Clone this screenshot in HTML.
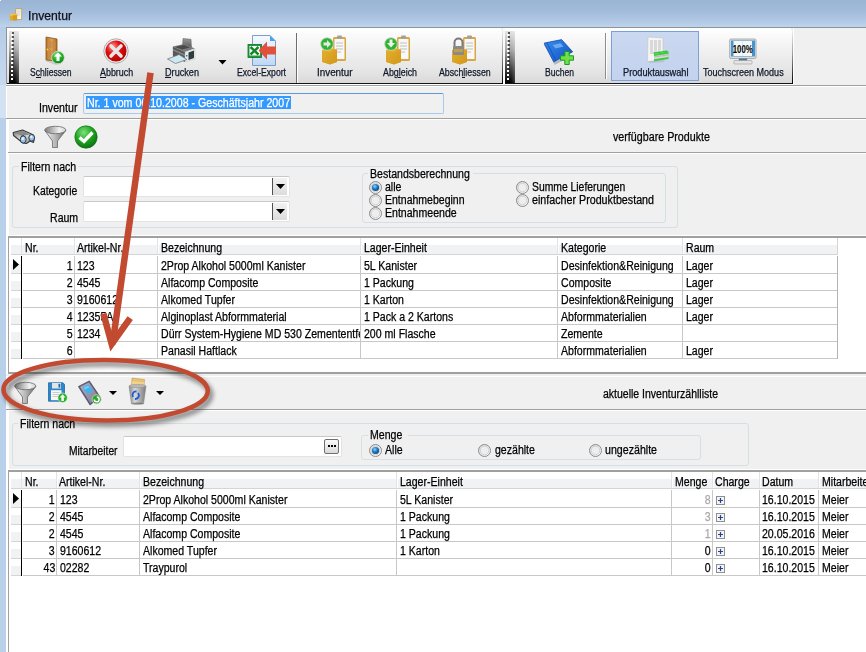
<!DOCTYPE html><html><head><meta charset="utf-8"><title>Inventur</title><style>
*{margin:0;padding:0;box-sizing:border-box}
html,body{width:866px;height:652px;overflow:hidden;background:#f0f0f0;position:relative;font-family:"Liberation Sans",sans-serif}
div,span,svg{position:absolute}
.t{white-space:nowrap;line-height:14px;-webkit-text-stroke:0.25px currentColor;font-family:"Liberation Sans",sans-serif}
</style></head><body><div style="left:0px;top:0px;width:866px;height:27px;background:linear-gradient(#9ab4d4,#a3bcdb 45%,#b2cae5 80%,#bdd4ec)"></div>
<div style="left:0px;top:27px;width:6px;height:58px;background:linear-gradient(#b6cde7,#c6d9ef)"></div>
<div style="left:0px;top:85px;width:6px;height:33px;background:#d2e2f3"></div>
<div style="left:0px;top:118px;width:6px;height:534px;background:#b9d0ea"></div>
<div style="left:0px;top:0px;width:1px;height:1px;background:#fff"></div>
<svg style="left:8px;top:7px" width="16" height="16" viewBox="0 0 16 16">
<rect x="7.3" y="1.2" width="6.8" height="11.6" rx="0.8" fill="#c9a050"/>
<rect x="8.2" y="2.2" width="5" height="9.8" fill="#f4f4f0"/>
<path d="M9 4 H12.5 M9 6 H12.5 M9 8 H12" stroke="#b8b8b8" stroke-width="0.6"/>
<rect x="1.8" y="6.8" width="7.4" height="6.8" rx="0.6" fill="#e2aa2a"/>
<rect x="1.8" y="6.8" width="7.4" height="2" fill="#f0c250"/>
<rect x="5" y="8" width="4" height="5.5" fill="#cf951c" opacity="0.7"/>
</svg>
<span class="t" style="left:27.5px;top:9px;font-size:12px;letter-spacing:0px;color:#10101a;transform:scaleX(1.015);transform-origin:0 0;">Inventur</span>
<div style="left:6px;top:27px;width:860px;height:1px;background:#8f9397"></div>
<div style="left:6px;top:28px;width:1px;height:624px;background:#ffffff"></div>
<div style="left:7px;top:119px;width:2px;height:533px;background:#ffffff"></div>
<div style="left:6px;top:27px;width:1px;height:57px;background:#8f9397"></div>
<div style="left:7px;top:28px;width:495px;height:55px;background:linear-gradient(#ffffff,#f6f6f6 25%,#e4e4e4 80%,#d9d9d9)"></div>
<div style="left:7px;top:83px;width:496px;height:1px;background:#141414"></div>
<div style="left:502px;top:30px;width:1px;height:54px;background:linear-gradient(#f0f0f0,#9a9a9a 45%,#000)"></div>
<div style="left:503px;top:29px;width:1px;height:56px;background:#ffffff"></div>
<div style="left:501px;top:28px;width:2px;height:2px;background:#f0f0f0"></div>
<div style="left:9px;top:31px;width:10px;height:52px;background:linear-gradient(#e4e4e4,#a8a8a8 35%,#3a3a3a 75%,#000)"></div>
<div style="left:15px;top:31px;width:4px;height:52px;background:linear-gradient(90deg,rgba(255,255,255,0),rgba(255,255,255,.2))"></div>
<div style="left:12px;top:32px;width:2px;height:2px;background:rgba(40,40,40,.75)"></div>
<div style="left:11px;top:34px;width:2px;height:2px;background:#fff"></div>
<div style="left:12px;top:36px;width:2px;height:2px;background:rgba(40,40,40,.75)"></div>
<div style="left:11px;top:38px;width:2px;height:2px;background:#fff"></div>
<div style="left:12px;top:40px;width:2px;height:2px;background:rgba(40,40,40,.75)"></div>
<div style="left:11px;top:42px;width:2px;height:2px;background:#fff"></div>
<div style="left:12px;top:44px;width:2px;height:2px;background:rgba(40,40,40,.75)"></div>
<div style="left:11px;top:46px;width:2px;height:2px;background:#fff"></div>
<div style="left:12px;top:48px;width:2px;height:2px;background:rgba(40,40,40,.75)"></div>
<div style="left:11px;top:50px;width:2px;height:2px;background:#fff"></div>
<div style="left:12px;top:52px;width:2px;height:2px;background:rgba(40,40,40,.75)"></div>
<div style="left:11px;top:54px;width:2px;height:2px;background:#fff"></div>
<div style="left:12px;top:56px;width:2px;height:2px;background:rgba(40,40,40,.75)"></div>
<div style="left:11px;top:58px;width:2px;height:2px;background:#fff"></div>
<div style="left:12px;top:60px;width:2px;height:2px;background:rgba(40,40,40,.75)"></div>
<div style="left:11px;top:62px;width:2px;height:2px;background:#fff"></div>
<div style="left:12px;top:64px;width:2px;height:2px;background:rgba(40,40,40,.75)"></div>
<div style="left:11px;top:66px;width:2px;height:2px;background:#fff"></div>
<div style="left:12px;top:68px;width:2px;height:2px;background:rgba(40,40,40,.75)"></div>
<div style="left:11px;top:70px;width:2px;height:2px;background:#fff"></div>
<div style="left:12px;top:72px;width:2px;height:2px;background:rgba(40,40,40,.75)"></div>
<div style="left:11px;top:74px;width:2px;height:2px;background:#fff"></div>
<div style="left:12px;top:76px;width:2px;height:2px;background:rgba(40,40,40,.75)"></div>
<div style="left:11px;top:78px;width:2px;height:2px;background:#fff"></div>
<div style="left:503px;top:28px;width:2px;height:56px;background:#fafafa"></div>
<div style="left:505px;top:28px;width:287px;height:55px;background:linear-gradient(#ffffff,#f6f6f6 25%,#e4e4e4 80%,#d9d9d9)"></div>
<div style="left:505px;top:83px;width:288px;height:1px;background:#141414"></div>
<div style="left:792px;top:30px;width:1px;height:54px;background:linear-gradient(#f0f0f0,#9a9a9a 45%,#000)"></div>
<div style="left:793px;top:29px;width:1px;height:56px;background:#ffffff"></div>
<div style="left:791px;top:28px;width:2px;height:2px;background:#f0f0f0"></div>
<div style="left:505px;top:31px;width:10px;height:52px;background:linear-gradient(#e4e4e4,#a8a8a8 35%,#3a3a3a 75%,#000)"></div>
<div style="left:511px;top:31px;width:4px;height:52px;background:linear-gradient(90deg,rgba(255,255,255,0),rgba(255,255,255,.2))"></div>
<div style="left:508px;top:32px;width:2px;height:2px;background:rgba(40,40,40,.75)"></div>
<div style="left:507px;top:34px;width:2px;height:2px;background:#fff"></div>
<div style="left:508px;top:36px;width:2px;height:2px;background:rgba(40,40,40,.75)"></div>
<div style="left:507px;top:38px;width:2px;height:2px;background:#fff"></div>
<div style="left:508px;top:40px;width:2px;height:2px;background:rgba(40,40,40,.75)"></div>
<div style="left:507px;top:42px;width:2px;height:2px;background:#fff"></div>
<div style="left:508px;top:44px;width:2px;height:2px;background:rgba(40,40,40,.75)"></div>
<div style="left:507px;top:46px;width:2px;height:2px;background:#fff"></div>
<div style="left:508px;top:48px;width:2px;height:2px;background:rgba(40,40,40,.75)"></div>
<div style="left:507px;top:50px;width:2px;height:2px;background:#fff"></div>
<div style="left:508px;top:52px;width:2px;height:2px;background:rgba(40,40,40,.75)"></div>
<div style="left:507px;top:54px;width:2px;height:2px;background:#fff"></div>
<div style="left:508px;top:56px;width:2px;height:2px;background:rgba(40,40,40,.75)"></div>
<div style="left:507px;top:58px;width:2px;height:2px;background:#fff"></div>
<div style="left:508px;top:60px;width:2px;height:2px;background:rgba(40,40,40,.75)"></div>
<div style="left:507px;top:62px;width:2px;height:2px;background:#fff"></div>
<div style="left:508px;top:64px;width:2px;height:2px;background:rgba(40,40,40,.75)"></div>
<div style="left:507px;top:66px;width:2px;height:2px;background:#fff"></div>
<div style="left:508px;top:68px;width:2px;height:2px;background:rgba(40,40,40,.75)"></div>
<div style="left:507px;top:70px;width:2px;height:2px;background:#fff"></div>
<div style="left:508px;top:72px;width:2px;height:2px;background:rgba(40,40,40,.75)"></div>
<div style="left:507px;top:74px;width:2px;height:2px;background:#fff"></div>
<div style="left:508px;top:76px;width:2px;height:2px;background:rgba(40,40,40,.75)"></div>
<div style="left:507px;top:78px;width:2px;height:2px;background:#fff"></div>
<div style="left:7px;top:84px;width:496px;height:1px;background:#ffffff"></div>
<div style="left:505px;top:84px;width:288px;height:1px;background:#ffffff"></div>
<div style="left:296px;top:33px;width:1px;height:50px;background:#6d6d6d"></div>
<div style="left:297px;top:33px;width:1px;height:50px;background:#ffffff"></div>
<div style="left:605px;top:33px;width:1px;height:46px;background:#8d8d8d"></div>
<div style="left:606px;top:33px;width:1px;height:46px;background:#ffffff"></div>
<div style="left:611px;top:31px;width:88px;height:50px;background:linear-gradient(#cad8f0,#c3d2ee);border:1px solid #7d9fdb"></div>
<span class="t" style="left:30px;top:67px;font-size:10px;line-height:12px;color:#101828;transform:scaleX(0.860);transform-origin:0 0;">Schliessen</span>
<span class="t" style="left:99.5px;top:67px;font-size:10px;line-height:12px;color:#101828;transform:scaleX(0.891);transform-origin:0 0;">Abbruch</span>
<span class="t" style="left:165px;top:67px;font-size:10px;line-height:12px;color:#101828;transform:scaleX(0.913);transform-origin:0 0;">Drucken</span>
<span class="t" style="left:237px;top:67px;font-size:10px;line-height:12px;color:#101828;transform:scaleX(0.864);transform-origin:0 0;">Excel-Export</span>
<span class="t" style="left:316.5px;top:67px;font-size:10px;line-height:12px;color:#101828;transform:scaleX(0.985);transform-origin:0 0;">Inventur</span>
<span class="t" style="left:383px;top:67px;font-size:10px;line-height:12px;color:#101828;transform:scaleX(0.886);transform-origin:0 0;">Abgleich</span>
<span class="t" style="left:438.5px;top:67px;font-size:10px;line-height:12px;color:#101828;transform:scaleX(0.877);transform-origin:0 0;">Abschliessen</span>
<span class="t" style="left:544.5px;top:67px;font-size:10px;line-height:12px;color:#101828;transform:scaleX(0.855);transform-origin:0 0;">Buchen</span>
<span class="t" style="left:622.5px;top:67px;font-size:10px;line-height:12px;color:#101828;transform:scaleX(0.921);transform-origin:0 0;">Produktauswahl</span>
<span class="t" style="left:702.5px;top:67px;font-size:10px;line-height:12px;color:#101828;transform:scaleX(0.901);transform-origin:0 0;">Touchscreen Modus</span>
<div style="left:36px;top:77px;width:5px;height:1px;background:#101828"></div>
<div style="left:100px;top:77px;width:6px;height:1px;background:#101828"></div>
<div style="left:165px;top:77px;width:6px;height:1px;background:#101828"></div>
<div style="left:398px;top:77px;width:3px;height:1px;background:#101828"></div>
<div style="left:462px;top:77px;width:3px;height:1px;background:#101828"></div>
<svg style="left:218px;top:60px" width="9" height="5" viewBox="0 0 9 5"><path d="M0.5 0 L8.5 0 L4.5 4.5Z" fill="#000"/></svg>
<svg style="left:40px;top:34px" width="28" height="34" viewBox="0 0 28 34">
<defs><linearGradient id="door" x1="0" x2="1"><stop offset="0" stop-color="#b8732a"/><stop offset="0.5" stop-color="#d9a25a"/><stop offset="1" stop-color="#b06a22"/></linearGradient>
<radialGradient id="grn" cx="0.4" cy="0.3" r="0.8"><stop offset="0" stop-color="#9be89b"/><stop offset="0.45" stop-color="#25b525"/><stop offset="1" stop-color="#0a7a12"/></radialGradient></defs>
<path d="M5 27 L16 31 L20 30 L9 26 Z" fill="#c9c9c9"/>
<path d="M6 3 L17 5 L17 27 L6 26 Z" fill="url(#door)" stroke="#8a5418" stroke-width="0.8"/>
<rect x="8" y="7" width="3.5" height="7" fill="#c98a48"/><rect x="12.5" y="7.5" width="3" height="7" fill="#c98a48"/>
<rect x="8" y="16" width="3.5" height="8" fill="#c98a48"/><rect x="12.5" y="16" width="3" height="8" fill="#c98a48"/>
<circle cx="7.5" cy="15.5" r="0.9" fill="#ffd030"/>
<circle cx="18" cy="23.5" r="6.3" fill="url(#grn)" stroke="#d8d8d8" stroke-width="0.8"/>
<path d="M18 18.5 L22 22.5 L19.5 22.5 L19.5 27 L16.5 27 L16.5 22.5 L14 22.5 Z" fill="#fff"/>
</svg>
<svg style="left:103px;top:38px" width="26" height="26" viewBox="0 0 26 26">
<defs><radialGradient id="red" cx="0.35" cy="0.3" r="0.8"><stop offset="0" stop-color="#ff9a9a"/><stop offset="0.4" stop-color="#e01010"/><stop offset="1" stop-color="#b00000"/></radialGradient></defs>
<circle cx="13" cy="13" r="12.2" fill="#f4f4f4" stroke="#a8a8a8" stroke-width="1"/>
<circle cx="13" cy="13" r="10.6" fill="url(#red)"/>
<path d="M8 8 L18 18 M18 8 L8 18" stroke="#e6e6e6" stroke-width="3.6" stroke-linecap="round"/>
</svg>
<svg style="left:160px;top:32px" width="40" height="34" viewBox="0 0 40 34">
<defs><linearGradient id="pb" x1="0" y1="0" x2="0" y2="1"><stop offset="0" stop-color="#9a9a9a"/><stop offset="1" stop-color="#555"/></linearGradient></defs>
<path d="M23 6.5 L31 7.3 L31.5 16 L22.5 15 Z" fill="url(#pb)" stroke="#5a5a5a" stroke-width="0.5"/>
<path d="M13 14.5 L24 12 L35 16.5 L25 20 Z" fill="#7a7a7a"/>
<path d="M15 15 L24 13 L30 15.5 L22 17.5 Z" fill="#4a4a4a"/>
<path d="M13 14.5 L25 20 L25 30 L13 24.5 Z" fill="#585858"/>
<path d="M13 17 L25 22.5 L25 24 L13 18.5 Z" fill="#8a8a8a"/>
<path d="M12 14.5 L13 14.5 L13 24 L12 23 Z" fill="#dcdcdc"/>
<path d="M25 20 L35 16.5 L35 27 L25 30 Z" fill="#e8ecec" stroke="#b8b8b8" stroke-width="0.4"/>
<path d="M28.5 20.5 L34 18.5 L34 26 L28.5 28 Z" fill="#2e3c3c"/>
<rect x="26" y="23" width="1.5" height="1.5" fill="#3a6ae0"/>
<path d="M7.5 27 L19 22.5 L27 27.5 L15.5 31.5 Z" fill="#cce8f2" stroke="#6a6a6a" stroke-width="0.7"/>
</svg>
<svg style="left:246px;top:34px" width="32" height="33" viewBox="0 0 32 33">
<defs><linearGradient id="doc" x1="0" y1="0" x2="0" y2="1"><stop offset="0" stop-color="#f6faff"/><stop offset="1" stop-color="#bcd8f6"/></linearGradient></defs>
<path d="M6.5 1.5 L24 1.5 L29.5 7 L29.5 31.5 L6.5 31.5 Z" fill="url(#doc)" stroke="#7e9ec8" stroke-width="1"/>
<path d="M24 1.5 L29.5 7 L24 7 Z" fill="#4aa0f0"/>
<rect x="2" y="10.5" width="13.5" height="13" fill="#1e9e3a" stroke="#0e6e22" stroke-width="0.8"/>
<rect x="3.5" y="12" width="10.5" height="9.5" fill="#fff"/>
<path d="M4.5 13 L12.5 20.5 M12.5 13 L4.5 20.5" stroke="#10882a" stroke-width="2.4"/>
<path d="M12.5 16.5 L21 7.5 L21 12.5 L30 12.5 L30 20.5 L21 20.5 L21 25.5 Z" fill="#e0503a"/>
</svg>
<svg style="left:320px;top:35px" width="28" height="30" viewBox="0 0 28 30">
<defs><linearGradient id="box320" x1="0" y1="0" x2="1" y2="1"><stop offset="0" stop-color="#f5c84a"/><stop offset="1" stop-color="#c58a10"/></linearGradient></defs>
<rect x="13" y="2" width="13" height="24" rx="1.5" fill="#d9a640"/>
<rect x="14.5" y="4" width="10" height="20" fill="#f8f8f8"/>
<path d="M16 8 H23 M16 11 H23 M16 14 H23 M16 17 H21" stroke="#b0b0b0" stroke-width="0.8"/>
<rect x="17" y="0.5" width="5" height="3" rx="1" fill="#a0a0a0"/>
<path d="M2 15 L8 12.5 L17 14.5 L17 27 L10 29.5 L2 27 Z" fill="url(#box320)"/>
<path d="M2 15 L10 17 L17 14.5 L17 27 L10 29.5 L2 27 Z" fill="#d9a020" opacity="0.6"/>
<circle cx="7" cy="9" r="6.3" fill="#2eb52e" stroke="#cfcfcf" stroke-width="0.8"/><path d="M3.5 7.5 H7 V5 L11 9 L7 13 V10.5 H3.5 Z" fill="#e8e8e8"/></svg>
<svg style="left:384px;top:35px" width="28" height="30" viewBox="0 0 28 30">
<defs><linearGradient id="box384" x1="0" y1="0" x2="1" y2="1"><stop offset="0" stop-color="#f5c84a"/><stop offset="1" stop-color="#c58a10"/></linearGradient></defs>
<rect x="13" y="2" width="13" height="24" rx="1.5" fill="#d9a640"/>
<rect x="14.5" y="4" width="10" height="20" fill="#f8f8f8"/>
<path d="M16 8 H23 M16 11 H23 M16 14 H23 M16 17 H21" stroke="#b0b0b0" stroke-width="0.8"/>
<rect x="17" y="0.5" width="5" height="3" rx="1" fill="#a0a0a0"/>
<path d="M2 15 L8 12.5 L17 14.5 L17 27 L10 29.5 L2 27 Z" fill="url(#box384)"/>
<path d="M2 15 L10 17 L17 14.5 L17 27 L10 29.5 L2 27 Z" fill="#d9a020" opacity="0.6"/>
<circle cx="7" cy="9" r="6.3" fill="#2eb52e" stroke="#cfcfcf" stroke-width="0.8"/><path d="M5.5 4.5 H8.5 V8 H11 L7 12.5 L3 8 H5.5 Z" fill="#f0f0f0"/></svg>
<svg style="left:450px;top:35px" width="28" height="30" viewBox="0 0 28 30">
<defs><linearGradient id="box450" x1="0" y1="0" x2="1" y2="1"><stop offset="0" stop-color="#f5c84a"/><stop offset="1" stop-color="#c58a10"/></linearGradient></defs>
<rect x="13" y="2" width="13" height="24" rx="1.5" fill="#d9a640"/>
<rect x="14.5" y="4" width="10" height="20" fill="#f8f8f8"/>
<path d="M16 8 H23 M16 11 H23 M16 14 H23 M16 17 H21" stroke="#b0b0b0" stroke-width="0.8"/>
<rect x="17" y="0.5" width="5" height="3" rx="1" fill="#a0a0a0"/>
<path d="M2 15 L8 12.5 L17 14.5 L17 27 L10 29.5 L2 27 Z" fill="url(#box450)"/>
<path d="M2 15 L10 17 L17 14.5 L17 27 L10 29.5 L2 27 Z" fill="#d9a020" opacity="0.6"/>
<path d="M4.5 12 V7.5 A4 4 0 0 1 12.5 7.5 V12" fill="none" stroke="#7a7a7a" stroke-width="2"/><rect x="3" y="11" width="11" height="9" rx="1" fill="#8a8a8a"/><rect x="4" y="14" width="9" height="3" fill="#c0a050"/></svg>
<svg style="left:543px;top:38px" width="32" height="30" viewBox="0 0 32 30">
<defs><linearGradient id="bk" x1="0" y1="0" x2="1" y2="1"><stop offset="0" stop-color="#3a8ef0"/><stop offset="1" stop-color="#0e4fc0"/></linearGradient></defs>
<path d="M1.2 5.1 L18.6 1.6 L29.7 13.8 L11.1 24.3 Z" fill="url(#bk)" stroke="#0b44a8" stroke-width="0.7"/>
<path d="M1.2 5.1 L11.1 24.3 L11.5 26 L1.5 7.2 Z" fill="#1a5cc8"/>
<path d="M3.8 4.6 L13 22.8" stroke="#1550b8" stroke-width="0.9"/>
<path d="M9.5 7 L17.5 5.2 L20.5 8.5 L12.5 10.5 Z" fill="#6aaaf0"/>
<path d="M11.1 24.3 L24 17 L24 20.5 L11.5 27 Z" fill="#b8b8b8"/>
<path d="M21.8 13.5 H26.2 V17.8 H30.5 V22.2 H26.2 V26.5 H21.8 V22.2 H17.5 V17.8 H21.8 Z" fill="#6ee04a" stroke="#1c9a1c" stroke-width="1"/>
</svg>
<svg style="left:640px;top:32px" width="36" height="36" viewBox="0 0 36 36">
<path d="M8 5 L23 6 L23 28 L7.5 29.5 Z" fill="#f4f4f4" stroke="#c4c4c4" stroke-width="0.6"/>
<path d="M10 9 H21 M10 11 H21 M10 13 H21 M10 15 H21 M10 17 H21 M10 19 H20 M10 21 H15" stroke="#b0b0b0" stroke-width="0.8" stroke-dasharray="3 1"/>
<path d="M13 20.5 L27 18.5 L28.5 19.5 L14 22 Z" fill="#2ec82e"/>
<path d="M14 22 L28.5 19.5 L28.5 27 L14 29.5 Z" fill="#3ccc3c"/>
<path d="M14 24 L28.5 21.7 L28.5 25 L14 27.3 Z" fill="#d8d8d8"/>
<path d="M14 24.5 L28.5 22.2 L28.5 23.2 L14 25.5 Z" fill="#b8b8b8"/>
<path d="M8 29.5 L23 28 L25 30 L10 31 Z" fill="#a8b0c0" opacity="0.5"/>
</svg>
<svg style="left:728px;top:38px" width="30" height="28" viewBox="0 0 30 28">
<rect x="1.7" y="1" width="26.3" height="19.5" rx="1.2" fill="#dcdfe0" stroke="#9a9ea0" stroke-width="0.8"/>
<rect x="3" y="2.5" width="24" height="16" fill="#4a94cc"/>
<rect x="5.5" y="3" width="18.5" height="15" fill="#f4f8fa"/>
<path d="M14.5 3 V18 M5.5 10.5 H24" stroke="#dde4e8" stroke-width="0.8"/>
<text x="14.7" y="14.6" font-family="Liberation Sans" font-size="10" font-weight="bold" text-anchor="middle" fill="#000" transform="translate(14.7 0) scale(0.78 1) translate(-14.7 0)">100%</text>
<path d="M11 20.5 L19 20.5 L19.5 23 L10.5 23 Z" fill="#5a7488"/>
<rect x="6" y="22.5" width="18" height="3.5" rx="0.5" fill="#e4e4e4" stroke="#9a9a9a" stroke-width="0.6"/>
</svg>
<svg style="left:10px;top:124px" width="28" height="24" viewBox="0 0 28 24">
<defs><linearGradient id="bino" x1="0" y1="0" x2="1" y2="1"><stop offset="0" stop-color="#6a6a6a"/><stop offset="0.5" stop-color="#e0e0e0"/><stop offset="1" stop-color="#7a7a7a"/></linearGradient></defs>
<path d="M3.2 8.5 L12.5 6 L23 10.8 L24.5 14 L23.5 18.5 L20 17 L16.5 19.5 L13 19 L3.5 11.5 Z" fill="url(#bino)" stroke="#3a3a3a" stroke-width="1.1" stroke-linejoin="round"/>
<path d="M4.5 8.8 L12.5 6.8 L20 10.5 L12 12 Z" fill="#8a8a8a"/>
<path d="M11 12.5 L14 11.5" stroke="#3a3a3a" stroke-width="0.8"/>
<ellipse cx="13.2" cy="15.5" rx="3" ry="3.6" fill="#8ec4f4" stroke="#3a3a3a" stroke-width="1"/>
<ellipse cx="21.7" cy="13.8" rx="2.9" ry="3.3" fill="#8ec4f4" stroke="#3a3a3a" stroke-width="1"/>
<ellipse cx="12.8" cy="14.5" rx="1.3" ry="1.5" fill="#e4f2ff"/>
<ellipse cx="21.3" cy="12.8" rx="1.2" ry="1.4" fill="#e4f2ff"/>
</svg>
<svg style="left:44px;top:125px" width="23" height="23" viewBox="0 0 23 23">
<defs><linearGradient id="fn125" x1="0" x2="1"><stop offset="0" stop-color="#f4f4f4"/><stop offset="0.5" stop-color="#b8b8b8"/><stop offset="1" stop-color="#6a6a6a"/></linearGradient>
<linearGradient id="fe125" x1="0" x2="1"><stop offset="0" stop-color="#7a7a7a"/><stop offset="0.7" stop-color="#f2f2f2"/><stop offset="1" stop-color="#d0d0d0"/></linearGradient></defs>
<path d="M0.8 5.5 L8.5 16 L8.5 22.5 L13.5 22.5 L13.5 16 L21.8 5.5 Z" fill="url(#fn125)" stroke="#6a6a6a" stroke-width="0.8" stroke-linejoin="round"/>
<ellipse cx="11.3" cy="5" rx="10.6" ry="3.7" fill="url(#fe125)" stroke="#6a6a6a" stroke-width="0.8"/>
</svg>
<svg style="left:74px;top:125px" width="24" height="24" viewBox="0 0 24 24">
<defs><radialGradient id="chk" cx="0.4" cy="0.3" r="0.75"><stop offset="0" stop-color="#7fe07f"/><stop offset="0.5" stop-color="#1ea81e"/><stop offset="1" stop-color="#0a6e10"/></radialGradient></defs>
<circle cx="12" cy="12" r="11.2" fill="url(#chk)" stroke="#0e6a14" stroke-width="0.6"/>
<path d="M5.5 12.5 L10 16.5 L18.5 7.5" fill="none" stroke="#fff" stroke-width="3.4" stroke-linejoin="miter"/>
</svg>
<svg style="left:14px;top:381px" width="23" height="23" viewBox="0 0 23 23">
<defs><linearGradient id="fn381" x1="0" x2="1"><stop offset="0" stop-color="#f4f4f4"/><stop offset="0.5" stop-color="#b8b8b8"/><stop offset="1" stop-color="#6a6a6a"/></linearGradient>
<linearGradient id="fe381" x1="0" x2="1"><stop offset="0" stop-color="#7a7a7a"/><stop offset="0.7" stop-color="#f2f2f2"/><stop offset="1" stop-color="#d0d0d0"/></linearGradient></defs>
<path d="M0.8 5.5 L8.5 16 L8.5 22.5 L13.5 22.5 L13.5 16 L21.8 5.5 Z" fill="url(#fn381)" stroke="#6a6a6a" stroke-width="0.8" stroke-linejoin="round"/>
<ellipse cx="11.3" cy="5" rx="10.6" ry="3.7" fill="url(#fe381)" stroke="#6a6a6a" stroke-width="0.8"/>
</svg>
<svg style="left:47px;top:382px" width="22" height="22" viewBox="0 0 22 22">
<path d="M1.5 0.8 L16 0.8 L17.5 2.5 L17.5 19.2 L1.5 19.2 Z" fill="#2e86c8" stroke="#1e6aa8" stroke-width="0.8"/>
<rect x="5" y="1" width="9" height="5.5" fill="#e4e4e4"/><rect x="11.5" y="1.8" width="1.8" height="3.8" fill="#1e6aa8"/>
<rect x="4" y="8.2" width="10.5" height="10" fill="#f8f8f8"/>
<path d="M5.5 10.5 H12.5 M5.5 12.5 H12.5 M5.5 14.5 H11" stroke="#b8b8b8" stroke-width="0.7"/>
<circle cx="15.6" cy="15.8" r="4.7" fill="#22b422" stroke="#e8e8e8" stroke-width="0.6"/>
<path d="M15.6 12.3 L18.6 15.5 H16.9 V19 H14.3 V15.5 H12.6 Z" fill="#f4f4f4"/>
</svg>
<svg style="left:74px;top:376px" width="32" height="32" viewBox="0 0 32 32">
<defs><linearGradient id="hh" x1="0" y1="0" x2="1" y2="1"><stop offset="0" stop-color="#b4b0c4"/><stop offset="1" stop-color="#7c7890"/></linearGradient></defs>
<path d="M4.9 10.6 L15.2 5.4 L25.5 20.6 L16.2 28.5 Z" fill="url(#hh)" stroke="#5e5a74" stroke-width="1.6" stroke-linejoin="round"/>
<path d="M8.6 11.3 L14.5 8.8 L18.9 14.7 L13.3 17.7 Z" fill="#38b4f0"/>
<path d="M9.6 11.6 L14.2 9.8 L15.5 11.5 L10.8 13.5 Z" fill="#8ad8ff" opacity="0.7"/>
<circle cx="22.6" cy="23.3" r="4.6" fill="#2aa82a" stroke="#e0e0e0" stroke-width="0.7"/>
<path d="M20.3 23.5 A2.4 2.4 0 1 0 22.8 21" fill="none" stroke="#fff" stroke-width="1.5"/>
</svg>
<svg style="left:109px;top:391px" width="8" height="4" viewBox="0 0 8 4"><path d="M0 0 L8 0 L4 4Z" fill="#000"/></svg>
<svg style="left:122px;top:376px" width="32" height="32" viewBox="0 0 32 32">
<defs><linearGradient id="tr" x1="0" x2="1"><stop offset="0" stop-color="#8a8a8a"/><stop offset="0.35" stop-color="#d8d8d8"/><stop offset="1" stop-color="#7a7a7a"/></linearGradient></defs>
<path d="M10 2 L22.5 3.5 L22 10.5 L9.5 10.5 Z" fill="#e8c078" stroke="#b8903a" stroke-width="0.5"/>
<path d="M10.5 5 L22.3 6.5 L22 9 L10 9 Z" fill="#f2d48a"/>
<path d="M7 10 L24 10 L21.5 28 L9.5 28 Z" fill="url(#tr)" stroke="#8a8a8a" stroke-width="0.6"/>
<ellipse cx="15.5" cy="10" rx="8.5" ry="1.6" fill="#b8b8b8" stroke="#8a8a8a" stroke-width="0.5"/>
<path d="M11 21 A3.6 3.6 0 0 1 14.5 15.5" fill="none" stroke="#1a5ad8" stroke-width="1.8"/>
<path d="M16 17 A3.6 3.6 0 0 1 13 23" fill="none" stroke="#1a5ad8" stroke-width="1.8"/>
<ellipse cx="15.5" cy="27.5" rx="5" ry="1" fill="#555" opacity="0.5"/>
</svg>
<svg style="left:155.5px;top:391px" width="8" height="4" viewBox="0 0 8 4"><path d="M0 0 L8 0 L4 4Z" fill="#000"/></svg>
<div style="left:6px;top:85px;width:860px;height:1px;background:#a0a0a0"></div>
<div style="left:6px;top:86px;width:860px;height:1px;background:#ffffff"></div>
<span class="t" style="left:38.5px;top:101px;font-size:12px;letter-spacing:0px;color:#000;transform:scaleX(0.886);transform-origin:0 0;">Inventur</span>
<div style="left:83px;top:93px;width:361px;height:21px;border:1px solid #a9c9ed;border-top-color:#5b9bd8;border-radius:2px;background:#f0f0f0"></div>
<div style="left:86px;top:96px;width:205px;height:13px;background:#3399ff"></div>
<span class="t" style="left:87px;top:96px;font-size:12px;letter-spacing:0px;color:#fff;transform:scaleX(0.885);transform-origin:0 0;">Nr. 1 vom 06.10.2008 - Geschäftsjahr 2007</span>
<div style="left:6px;top:118px;width:860px;height:1px;background:#a0a0a0"></div>
<div style="left:6px;top:119px;width:860px;height:1px;background:#ffffff"></div>
<span class="t" style="left:612.7px;top:130px;font-size:12px;letter-spacing:0px;color:#000;transform:scaleX(0.892);transform-origin:0 0;">verfügbare Produkte</span>
<div style="left:8px;top:152px;width:858px;height:1px;background:#a0a0a0"></div>
<div style="left:9px;top:153px;width:857px;height:1px;background:#ffffff"></div>
<div style="left:12px;top:166px;width:666px;height:62px;border:1px solid #d5dfe5;border-radius:3px"></div>
<div style="left:18.8px;top:165px;width:59px;height:3px;background:#f0f0f0"></div>
<span class="t" style="left:20.8px;top:160px;font-size:12px;letter-spacing:0px;color:#000;transform:scaleX(0.880);transform-origin:0 0;">Filtern nach</span>
<span class="t" style="left:32.6px;top:184px;font-size:12px;letter-spacing:0px;color:#000;transform:scaleX(0.862);transform-origin:0 0;">Kategorie</span>
<span class="t" style="left:49.6px;top:211px;font-size:12px;letter-spacing:0px;color:#000;transform:scaleX(0.880);transform-origin:0 0;">Raum</span>
<div style="left:83px;top:176px;width:207px;height:21px;border:1px solid #e3e3e3;border-top-color:#c8c8c8;border-radius:2px;background:#fff"></div>
<div style="left:272px;top:178px;width:1px;height:17px;background:#505050"></div>
<div style="left:273px;top:178px;width:14px;height:17px;background:linear-gradient(#f2f2f2,#dcdcdc)"></div>
<svg style="left:276px;top:184px" width="9" height="5" viewBox="0 0 9 5"><path d="M0 0 L9 0 L4.5 5Z" fill="#000"/></svg>
<div style="left:83px;top:201px;width:207px;height:21px;border:1px solid #e3e3e3;border-top-color:#c8c8c8;border-radius:2px;background:#fff"></div>
<div style="left:272px;top:203px;width:1px;height:17px;background:#505050"></div>
<div style="left:273px;top:203px;width:14px;height:17px;background:linear-gradient(#f2f2f2,#dcdcdc)"></div>
<svg style="left:276px;top:209px" width="9" height="5" viewBox="0 0 9 5"><path d="M0 0 L9 0 L4.5 5Z" fill="#000"/></svg>
<div style="left:362px;top:173px;width:304px;height:50px;border:1px solid #d5dfe5;border-radius:3px"></div>
<div style="left:367.7px;top:172px;width:105px;height:3px;background:#f0f0f0"></div>
<span class="t" style="left:369.7px;top:167px;font-size:12px;letter-spacing:0px;color:#000;transform:scaleX(0.880);transform-origin:0 0;">Bestandsberechnung</span>
<svg style="left:368.5px;top:180.5px" width="13" height="13" viewBox="0 0 13 13"><defs><linearGradient id="rg" x1="0" y1="0" x2="1" y2="1"><stop offset="0" stop-color="#d8d8d8"/><stop offset="1" stop-color="#ffffff"/></linearGradient><radialGradient id="rb" cx="0.4" cy="0.35" r="0.7"><stop offset="0" stop-color="#8fd4ff"/><stop offset="0.5" stop-color="#1b7dc4"/><stop offset="1" stop-color="#0a3f77"/></radialGradient></defs><circle cx="6.5" cy="6.5" r="6" fill="url(#rg)" stroke="#8a8a8a" stroke-width="1"/><circle cx="6.5" cy="6.5" r="4.3" fill="#eeeeee" stroke="#c9c9c9" stroke-width="0.8"/><circle cx="6.5" cy="6.5" r="3.6" fill="url(#rb)"/></svg>
<span class="t" style="left:385.4px;top:180px;font-size:12px;letter-spacing:0px;color:#000;transform:scaleX(0.880);transform-origin:0 0;">alle</span>
<svg style="left:368.5px;top:193.5px" width="13" height="13" viewBox="0 0 13 13"><defs><linearGradient id="rg" x1="0" y1="0" x2="1" y2="1"><stop offset="0" stop-color="#d8d8d8"/><stop offset="1" stop-color="#ffffff"/></linearGradient><radialGradient id="rb" cx="0.4" cy="0.35" r="0.7"><stop offset="0" stop-color="#8fd4ff"/><stop offset="0.5" stop-color="#1b7dc4"/><stop offset="1" stop-color="#0a3f77"/></radialGradient></defs><circle cx="6.5" cy="6.5" r="6" fill="url(#rg)" stroke="#8a8a8a" stroke-width="1"/><circle cx="6.5" cy="6.5" r="4.3" fill="#eeeeee" stroke="#c9c9c9" stroke-width="0.8"/></svg>
<span class="t" style="left:385.4px;top:193px;font-size:12px;letter-spacing:0px;color:#000;transform:scaleX(0.877);transform-origin:0 0;">Entnahmebeginn</span>
<svg style="left:368.5px;top:206.5px" width="13" height="13" viewBox="0 0 13 13"><defs><linearGradient id="rg" x1="0" y1="0" x2="1" y2="1"><stop offset="0" stop-color="#d8d8d8"/><stop offset="1" stop-color="#ffffff"/></linearGradient><radialGradient id="rb" cx="0.4" cy="0.35" r="0.7"><stop offset="0" stop-color="#8fd4ff"/><stop offset="0.5" stop-color="#1b7dc4"/><stop offset="1" stop-color="#0a3f77"/></radialGradient></defs><circle cx="6.5" cy="6.5" r="6" fill="url(#rg)" stroke="#8a8a8a" stroke-width="1"/><circle cx="6.5" cy="6.5" r="4.3" fill="#eeeeee" stroke="#c9c9c9" stroke-width="0.8"/></svg>
<span class="t" style="left:385.4px;top:206px;font-size:12px;letter-spacing:0px;color:#000;transform:scaleX(0.880);transform-origin:0 0;">Entnahmeende</span>
<svg style="left:515.5px;top:180.5px" width="13" height="13" viewBox="0 0 13 13"><defs><linearGradient id="rg" x1="0" y1="0" x2="1" y2="1"><stop offset="0" stop-color="#d8d8d8"/><stop offset="1" stop-color="#ffffff"/></linearGradient><radialGradient id="rb" cx="0.4" cy="0.35" r="0.7"><stop offset="0" stop-color="#8fd4ff"/><stop offset="0.5" stop-color="#1b7dc4"/><stop offset="1" stop-color="#0a3f77"/></radialGradient></defs><circle cx="6.5" cy="6.5" r="6" fill="url(#rg)" stroke="#8a8a8a" stroke-width="1"/><circle cx="6.5" cy="6.5" r="4.3" fill="#eeeeee" stroke="#c9c9c9" stroke-width="0.8"/></svg>
<span class="t" style="left:532.4px;top:180px;font-size:12px;letter-spacing:0px;color:#000;transform:scaleX(0.863);transform-origin:0 0;">Summe Lieferungen</span>
<svg style="left:515.5px;top:193.5px" width="13" height="13" viewBox="0 0 13 13"><defs><linearGradient id="rg" x1="0" y1="0" x2="1" y2="1"><stop offset="0" stop-color="#d8d8d8"/><stop offset="1" stop-color="#ffffff"/></linearGradient><radialGradient id="rb" cx="0.4" cy="0.35" r="0.7"><stop offset="0" stop-color="#8fd4ff"/><stop offset="0.5" stop-color="#1b7dc4"/><stop offset="1" stop-color="#0a3f77"/></radialGradient></defs><circle cx="6.5" cy="6.5" r="6" fill="url(#rg)" stroke="#8a8a8a" stroke-width="1"/><circle cx="6.5" cy="6.5" r="4.3" fill="#eeeeee" stroke="#c9c9c9" stroke-width="0.8"/></svg>
<span class="t" style="left:532.4px;top:193px;font-size:12px;letter-spacing:0px;color:#000;transform:scaleX(0.892);transform-origin:0 0;">einfacher Produktbestand</span>
<div style="left:6px;top:235px;width:860px;height:1px;background:#ffffff"></div>
<div style="left:8px;top:236px;width:858px;height:138px;background:#fff"></div>
<div style="left:8px;top:236px;width:858px;height:2px;background:#a0a0a0"></div>
<div style="left:8px;top:236px;width:1px;height:138px;background:#a0a0a0"></div>
<div style="left:11px;top:238px;width:826px;height:7px;background:#ffffff"></div>
<div style="left:11px;top:245px;width:826px;height:9px;background:#f1f2f4"></div>
<div style="left:11px;top:254px;width:826px;height:1px;background:#d5d5d5"></div>
<div style="left:74px;top:238px;width:1px;height:16px;background:#e2e3e6"></div>
<div style="left:75px;top:238px;width:1px;height:16px;background:#ffffff"></div>
<div style="left:157px;top:238px;width:1px;height:16px;background:#e2e3e6"></div>
<div style="left:158px;top:238px;width:1px;height:16px;background:#ffffff"></div>
<div style="left:360px;top:238px;width:1px;height:16px;background:#e2e3e6"></div>
<div style="left:361px;top:238px;width:1px;height:16px;background:#ffffff"></div>
<div style="left:557px;top:238px;width:1px;height:16px;background:#e2e3e6"></div>
<div style="left:558px;top:238px;width:1px;height:16px;background:#ffffff"></div>
<div style="left:682px;top:238px;width:1px;height:16px;background:#e2e3e6"></div>
<div style="left:683px;top:238px;width:1px;height:16px;background:#ffffff"></div>
<div style="left:21px;top:238px;width:1px;height:16px;background:#e2e3e6"></div>
<div style="left:837px;top:238px;width:1px;height:17px;background:#d5d5d5"></div>
<span class="t" style="left:24.6px;top:241px;font-size:12px;letter-spacing:0px;color:#000;transform:scaleX(0.880);transform-origin:0 0;">Nr.</span>
<span class="t" style="left:77px;top:241px;font-size:12px;letter-spacing:0px;color:#000;transform:scaleX(0.880);transform-origin:0 0;">Artikel-Nr.</span>
<span class="t" style="left:160.8px;top:241px;font-size:12px;letter-spacing:0px;color:#000;transform:scaleX(0.880);transform-origin:0 0;">Bezeichnung</span>
<span class="t" style="left:363.6px;top:241px;font-size:12px;letter-spacing:0px;color:#000;transform:scaleX(0.880);transform-origin:0 0;">Lager-Einheit</span>
<span class="t" style="left:560.8px;top:241px;font-size:12px;letter-spacing:0px;color:#000;transform:scaleX(0.880);transform-origin:0 0;">Kategorie</span>
<span class="t" style="left:685.5px;top:241px;font-size:12px;letter-spacing:0px;color:#000;transform:scaleX(0.880);transform-origin:0 0;">Raum</span>
<div style="left:11px;top:257px;width:10px;height:7px;background:#ffffff"></div>
<div style="left:11px;top:264px;width:10px;height:9px;background:#f1f2f4"></div>
<div style="left:11px;top:273px;width:10px;height:1px;background:#d5d5d5"></div>
<div style="left:23px;top:273px;width:814px;height:1px;background:#c8c8c8"></div>
<span class="t" style="right:793px;top:259px;font-size:12px;letter-spacing:0px;color:#000;text-align:right;transform:scaleX(0.880);transform-origin:100% 0">1</span>
<span class="t" style="left:77px;top:259px;font-size:12px;letter-spacing:0px;color:#000;transform:scaleX(0.880);transform-origin:0 0;">123</span>
<span class="t" style="left:160.5px;top:259px;font-size:12px;letter-spacing:0px;color:#000;transform:scaleX(0.880);transform-origin:0 0;">2Prop Alkohol 5000ml Kanister</span>
<span class="t" style="left:363.5px;top:259px;font-size:12px;letter-spacing:0px;color:#000;transform:scaleX(0.880);transform-origin:0 0;">5L Kanister</span>
<span class="t" style="left:560.5px;top:259px;font-size:12px;letter-spacing:0px;color:#000;transform:scaleX(0.880);transform-origin:0 0;">Desinfektion&amp;Reinigung</span>
<span class="t" style="left:685.5px;top:259px;font-size:12px;letter-spacing:0px;color:#000;transform:scaleX(0.880);transform-origin:0 0;">Lager</span>
<div style="left:11px;top:274px;width:10px;height:7px;background:#ffffff"></div>
<div style="left:11px;top:281px;width:10px;height:9px;background:#f1f2f4"></div>
<div style="left:11px;top:290px;width:10px;height:1px;background:#d5d5d5"></div>
<div style="left:23px;top:290px;width:814px;height:1px;background:#c8c8c8"></div>
<span class="t" style="right:793px;top:276px;font-size:12px;letter-spacing:0px;color:#000;text-align:right;transform:scaleX(0.880);transform-origin:100% 0">2</span>
<span class="t" style="left:77px;top:276px;font-size:12px;letter-spacing:0px;color:#000;transform:scaleX(0.880);transform-origin:0 0;">4545</span>
<span class="t" style="left:160.5px;top:276px;font-size:12px;letter-spacing:0px;color:#000;transform:scaleX(0.880);transform-origin:0 0;">Alfacomp Composite</span>
<span class="t" style="left:363.5px;top:276px;font-size:12px;letter-spacing:0px;color:#000;transform:scaleX(0.880);transform-origin:0 0;">1 Packung</span>
<span class="t" style="left:560.5px;top:276px;font-size:12px;letter-spacing:0px;color:#000;transform:scaleX(0.880);transform-origin:0 0;">Composite</span>
<span class="t" style="left:685.5px;top:276px;font-size:12px;letter-spacing:0px;color:#000;transform:scaleX(0.880);transform-origin:0 0;">Lager</span>
<div style="left:11px;top:291px;width:10px;height:7px;background:#ffffff"></div>
<div style="left:11px;top:298px;width:10px;height:9px;background:#f1f2f4"></div>
<div style="left:11px;top:307px;width:10px;height:1px;background:#d5d5d5"></div>
<div style="left:23px;top:307px;width:814px;height:1px;background:#c8c8c8"></div>
<span class="t" style="right:793px;top:293px;font-size:12px;letter-spacing:0px;color:#000;text-align:right;transform:scaleX(0.880);transform-origin:100% 0">3</span>
<span class="t" style="left:77px;top:293px;font-size:12px;letter-spacing:0px;color:#000;transform:scaleX(0.880);transform-origin:0 0;">9160612</span>
<span class="t" style="left:160.5px;top:293px;font-size:12px;letter-spacing:0px;color:#000;transform:scaleX(0.880);transform-origin:0 0;">Alkomed Tupfer</span>
<span class="t" style="left:363.5px;top:293px;font-size:12px;letter-spacing:0px;color:#000;transform:scaleX(0.880);transform-origin:0 0;">1 Karton</span>
<span class="t" style="left:560.5px;top:293px;font-size:12px;letter-spacing:0px;color:#000;transform:scaleX(0.880);transform-origin:0 0;">Desinfektion&amp;Reinigung</span>
<span class="t" style="left:685.5px;top:293px;font-size:12px;letter-spacing:0px;color:#000;transform:scaleX(0.880);transform-origin:0 0;">Lager</span>
<div style="left:11px;top:308px;width:10px;height:7px;background:#ffffff"></div>
<div style="left:11px;top:315px;width:10px;height:9px;background:#f1f2f4"></div>
<div style="left:11px;top:324px;width:10px;height:1px;background:#d5d5d5"></div>
<div style="left:23px;top:324px;width:814px;height:1px;background:#c8c8c8"></div>
<span class="t" style="right:793px;top:310px;font-size:12px;letter-spacing:0px;color:#000;text-align:right;transform:scaleX(0.880);transform-origin:100% 0">4</span>
<span class="t" style="left:77px;top:310px;font-size:12px;letter-spacing:0px;color:#000;transform:scaleX(0.880);transform-origin:0 0;">12355A</span>
<span class="t" style="left:160.5px;top:310px;font-size:12px;letter-spacing:0px;color:#000;transform:scaleX(0.880);transform-origin:0 0;">Alginoplast Abformmaterial</span>
<span class="t" style="left:363.5px;top:310px;font-size:12px;letter-spacing:0px;color:#000;transform:scaleX(0.880);transform-origin:0 0;">1 Pack a 2 Kartons</span>
<span class="t" style="left:560.5px;top:310px;font-size:12px;letter-spacing:0px;color:#000;transform:scaleX(0.880);transform-origin:0 0;">Abformmaterialien</span>
<span class="t" style="left:685.5px;top:310px;font-size:12px;letter-spacing:0px;color:#000;transform:scaleX(0.880);transform-origin:0 0;">Lager</span>
<div style="left:11px;top:325px;width:10px;height:7px;background:#ffffff"></div>
<div style="left:11px;top:332px;width:10px;height:9px;background:#f1f2f4"></div>
<div style="left:11px;top:341px;width:10px;height:1px;background:#d5d5d5"></div>
<div style="left:23px;top:341px;width:814px;height:1px;background:#c8c8c8"></div>
<span class="t" style="right:793px;top:327px;font-size:12px;letter-spacing:0px;color:#000;text-align:right;transform:scaleX(0.880);transform-origin:100% 0">5</span>
<span class="t" style="left:77px;top:327px;font-size:12px;letter-spacing:0px;color:#000;transform:scaleX(0.880);transform-origin:0 0;">1234</span>
<div style="left:159.5px;top:327px;width:200.5px;height:14px;overflow:hidden">
<span class="t" style="left:1px;top:0;font-size:12px;color:#000;transform:scaleX(0.88);transform-origin:0 0">Dürr System-Hygiene MD 530 Zemententfernung</span>
</div>
<span class="t" style="left:363.5px;top:327px;font-size:12px;letter-spacing:0px;color:#000;transform:scaleX(0.880);transform-origin:0 0;">200 ml Flasche</span>
<span class="t" style="left:560.5px;top:327px;font-size:12px;letter-spacing:0px;color:#000;transform:scaleX(0.880);transform-origin:0 0;">Zemente</span>
<div style="left:11px;top:342px;width:10px;height:7px;background:#ffffff"></div>
<div style="left:11px;top:349px;width:10px;height:9px;background:#f1f2f4"></div>
<div style="left:11px;top:358px;width:10px;height:1px;background:#d5d5d5"></div>
<div style="left:23px;top:358px;width:814px;height:1px;background:#c8c8c8"></div>
<span class="t" style="right:793px;top:344px;font-size:12px;letter-spacing:0px;color:#000;text-align:right;transform:scaleX(0.880);transform-origin:100% 0">6</span>
<span class="t" style="left:160.5px;top:344px;font-size:12px;letter-spacing:0px;color:#000;transform:scaleX(0.880);transform-origin:0 0;">Panasil Haftlack</span>
<span class="t" style="left:560.5px;top:344px;font-size:12px;letter-spacing:0px;color:#000;transform:scaleX(0.880);transform-origin:0 0;">Abformmaterialien</span>
<span class="t" style="left:685.5px;top:344px;font-size:12px;letter-spacing:0px;color:#000;transform:scaleX(0.880);transform-origin:0 0;">Lager</span>
<div style="left:74px;top:256px;width:1px;height:103px;background:#c8c8c8"></div>
<div style="left:157px;top:256px;width:1px;height:103px;background:#c8c8c8"></div>
<div style="left:360px;top:256px;width:1px;height:103px;background:#c8c8c8"></div>
<div style="left:557px;top:256px;width:1px;height:103px;background:#c8c8c8"></div>
<div style="left:682px;top:256px;width:1px;height:103px;background:#c8c8c8"></div>
<div style="left:837px;top:256px;width:1px;height:103px;background:#b4b4b4"></div>
<div style="left:21px;top:256px;width:1px;height:103px;background:#000"></div>
<svg style="left:13px;top:259px" width="7" height="11" viewBox="0 0 7 11"><path d="M0 0 L6 5.5 L0 11Z" fill="#000"/></svg>
<div style="left:8px;top:372px;width:858px;height:2px;background:#a0a0a0"></div>
<div style="left:6px;top:374px;width:860px;height:2px;background:#f0f0f0"></div>
<div style="left:6px;top:376px;width:860px;height:1px;background:#ffffff"></div>
<span class="t" style="left:602.9px;top:387px;font-size:12px;letter-spacing:0px;color:#000;transform:scaleX(0.875);transform-origin:0 0;">aktuelle Inventurzählliste</span>
<div style="left:6px;top:409px;width:860px;height:1px;background:#a0a0a0"></div>
<div style="left:6px;top:410px;width:860px;height:1px;background:#ffffff"></div>
<div style="left:12px;top:423px;width:737px;height:43px;border:1px solid #d5dfe5;border-radius:3px"></div>
<div style="left:18.2px;top:422px;width:59px;height:3px;background:#f0f0f0"></div>
<span class="t" style="left:20.2px;top:417px;font-size:12px;letter-spacing:0px;color:#000;transform:scaleX(0.880);transform-origin:0 0;">Filtern nach</span>
<span class="t" style="left:68.7px;top:444px;font-size:12px;letter-spacing:0px;color:#000;transform:scaleX(0.856);transform-origin:0 0;">Mitarbeiter</span>
<div style="left:123px;top:436px;width:219px;height:21px;border:1px solid #e3e3e3;border-top-color:#c8c8c8;border-radius:2px;background:#fff"></div>
<div style="left:324px;top:439px;width:15px;height:15px;border:1px solid #6f6f6f;border-radius:2px;background:linear-gradient(#fafafa,#d9d9d9)"></div>
<div style="left:328px;top:445px;width:2px;height:2px;background:#000"></div>
<div style="left:331px;top:445px;width:2px;height:2px;background:#000"></div>
<div style="left:334px;top:445px;width:2px;height:2px;background:#000"></div>
<div style="left:361px;top:435px;width:340px;height:25px;border:1px solid #d5dfe5;border-radius:3px"></div>
<div style="left:367.6px;top:434px;width:40px;height:3px;background:#f0f0f0"></div>
<span class="t" style="left:369.6px;top:428px;font-size:12px;letter-spacing:0px;color:#000;transform:scaleX(0.880);transform-origin:0 0;">Menge</span>
<svg style="left:368.5px;top:443.5px" width="13" height="13" viewBox="0 0 13 13"><defs><linearGradient id="rg" x1="0" y1="0" x2="1" y2="1"><stop offset="0" stop-color="#d8d8d8"/><stop offset="1" stop-color="#ffffff"/></linearGradient><radialGradient id="rb" cx="0.4" cy="0.35" r="0.7"><stop offset="0" stop-color="#8fd4ff"/><stop offset="0.5" stop-color="#1b7dc4"/><stop offset="1" stop-color="#0a3f77"/></radialGradient></defs><circle cx="6.5" cy="6.5" r="6" fill="url(#rg)" stroke="#8a8a8a" stroke-width="1"/><circle cx="6.5" cy="6.5" r="4.3" fill="#eeeeee" stroke="#c9c9c9" stroke-width="0.8"/><circle cx="6.5" cy="6.5" r="3.6" fill="url(#rb)"/></svg>
<span class="t" style="left:384.8px;top:443px;font-size:12px;letter-spacing:0px;color:#000;transform:scaleX(0.880);transform-origin:0 0;">Alle</span>
<svg style="left:478.2px;top:443.5px" width="13" height="13" viewBox="0 0 13 13"><defs><linearGradient id="rg" x1="0" y1="0" x2="1" y2="1"><stop offset="0" stop-color="#d8d8d8"/><stop offset="1" stop-color="#ffffff"/></linearGradient><radialGradient id="rb" cx="0.4" cy="0.35" r="0.7"><stop offset="0" stop-color="#8fd4ff"/><stop offset="0.5" stop-color="#1b7dc4"/><stop offset="1" stop-color="#0a3f77"/></radialGradient></defs><circle cx="6.5" cy="6.5" r="6" fill="url(#rg)" stroke="#8a8a8a" stroke-width="1"/><circle cx="6.5" cy="6.5" r="4.3" fill="#eeeeee" stroke="#c9c9c9" stroke-width="0.8"/></svg>
<span class="t" style="left:495.4px;top:443px;font-size:12px;letter-spacing:0px;color:#000;transform:scaleX(0.880);transform-origin:0 0;">gezählte</span>
<svg style="left:588.5px;top:443.5px" width="13" height="13" viewBox="0 0 13 13"><defs><linearGradient id="rg" x1="0" y1="0" x2="1" y2="1"><stop offset="0" stop-color="#d8d8d8"/><stop offset="1" stop-color="#ffffff"/></linearGradient><radialGradient id="rb" cx="0.4" cy="0.35" r="0.7"><stop offset="0" stop-color="#8fd4ff"/><stop offset="0.5" stop-color="#1b7dc4"/><stop offset="1" stop-color="#0a3f77"/></radialGradient></defs><circle cx="6.5" cy="6.5" r="6" fill="url(#rg)" stroke="#8a8a8a" stroke-width="1"/><circle cx="6.5" cy="6.5" r="4.3" fill="#eeeeee" stroke="#c9c9c9" stroke-width="0.8"/></svg>
<span class="t" style="left:605.1px;top:443px;font-size:12px;letter-spacing:0px;color:#000;transform:scaleX(0.886);transform-origin:0 0;">ungezählte</span>
<div style="left:6px;top:469px;width:860px;height:1px;background:#ffffff"></div>
<div style="left:8px;top:470px;width:858px;height:182px;background:#fff"></div>
<div style="left:8px;top:470px;width:858px;height:2px;background:#a0a0a0"></div>
<div style="left:8px;top:470px;width:1px;height:182px;background:#a0a0a0"></div>
<div style="left:11px;top:472px;width:855px;height:7px;background:#ffffff"></div>
<div style="left:11px;top:479px;width:855px;height:9px;background:#f1f2f4"></div>
<div style="left:11px;top:488px;width:855px;height:1px;background:#d5d5d5"></div>
<div style="left:56px;top:472px;width:1px;height:16px;background:#e2e3e6"></div>
<div style="left:57px;top:472px;width:1px;height:16px;background:#ffffff"></div>
<div style="left:139px;top:472px;width:1px;height:16px;background:#e2e3e6"></div>
<div style="left:140px;top:472px;width:1px;height:16px;background:#ffffff"></div>
<div style="left:396px;top:472px;width:1px;height:16px;background:#e2e3e6"></div>
<div style="left:397px;top:472px;width:1px;height:16px;background:#ffffff"></div>
<div style="left:671px;top:472px;width:1px;height:16px;background:#e2e3e6"></div>
<div style="left:672px;top:472px;width:1px;height:16px;background:#ffffff"></div>
<div style="left:712px;top:472px;width:1px;height:16px;background:#e2e3e6"></div>
<div style="left:713px;top:472px;width:1px;height:16px;background:#ffffff"></div>
<div style="left:759px;top:472px;width:1px;height:16px;background:#e2e3e6"></div>
<div style="left:760px;top:472px;width:1px;height:16px;background:#ffffff"></div>
<div style="left:818px;top:472px;width:1px;height:16px;background:#e2e3e6"></div>
<div style="left:819px;top:472px;width:1px;height:16px;background:#ffffff"></div>
<div style="left:21px;top:472px;width:1px;height:16px;background:#e2e3e6"></div>
<span class="t" style="left:25px;top:475px;font-size:12px;letter-spacing:0px;color:#000;transform:scaleX(0.880);transform-origin:0 0;">Nr.</span>
<span class="t" style="left:59.1px;top:475px;font-size:12px;letter-spacing:0px;color:#000;transform:scaleX(0.880);transform-origin:0 0;">Artikel-Nr.</span>
<span class="t" style="left:142.6px;top:475px;font-size:12px;letter-spacing:0px;color:#000;transform:scaleX(0.880);transform-origin:0 0;">Bezeichnung</span>
<span class="t" style="left:399.7px;top:475px;font-size:12px;letter-spacing:0px;color:#000;transform:scaleX(0.880);transform-origin:0 0;">Lager-Einheit</span>
<span class="t" style="left:674.7px;top:475px;font-size:12px;letter-spacing:0px;color:#000;transform:scaleX(0.880);transform-origin:0 0;">Menge</span>
<span class="t" style="left:715.4px;top:475px;font-size:12px;letter-spacing:0px;color:#000;transform:scaleX(0.880);transform-origin:0 0;">Charge</span>
<span class="t" style="left:762.3px;top:475px;font-size:12px;letter-spacing:0px;color:#000;transform:scaleX(0.880);transform-origin:0 0;">Datum</span>
<span class="t" style="left:821.7px;top:475px;font-size:12px;letter-spacing:0px;color:#000;transform:scaleX(0.880);transform-origin:0 0;">Mitarbeiter</span>
<div style="left:11px;top:491px;width:10px;height:7px;background:#ffffff"></div>
<div style="left:11px;top:498px;width:10px;height:9px;background:#f1f2f4"></div>
<div style="left:11px;top:507px;width:10px;height:1px;background:#d5d5d5"></div>
<div style="left:23px;top:507px;width:843px;height:1px;background:#c8c8c8"></div>
<span class="t" style="right:811px;top:493px;font-size:12px;letter-spacing:0px;color:#000;text-align:right;transform:scaleX(0.880);transform-origin:100% 0">1</span>
<span class="t" style="left:59.5px;top:493px;font-size:12px;letter-spacing:0px;color:#000;transform:scaleX(0.880);transform-origin:0 0;">123</span>
<span class="t" style="left:142.6px;top:493px;font-size:12px;letter-spacing:0px;color:#000;transform:scaleX(0.880);transform-origin:0 0;">2Prop Alkohol 5000ml Kanister</span>
<span class="t" style="left:399.5px;top:493px;font-size:12px;letter-spacing:0px;color:#000;transform:scaleX(0.880);transform-origin:0 0;">5L Kanister</span>
<span class="t" style="right:155px;top:493px;font-size:12px;letter-spacing:0px;color:#a8a8a8;text-align:right;transform:scaleX(0.880);transform-origin:100% 0">8</span>
<svg style="left:716px;top:496px" width="9" height="9" viewBox="0 0 9 9"><rect x="0.5" y="0.5" width="8" height="8" fill="#f4f4f4" stroke="#8e8f8f"/><path d="M2 4.5 H7 M4.5 2 V7" stroke="#23468c" stroke-width="1.2"/></svg>
<span class="t" style="left:762.3px;top:493px;font-size:12px;letter-spacing:0px;color:#000;transform:scaleX(0.880);transform-origin:0 0;">16.10.2015</span>
<span class="t" style="left:821.7px;top:493px;font-size:12px;letter-spacing:0px;color:#000;transform:scaleX(0.880);transform-origin:0 0;">Meier</span>
<div style="left:11px;top:508px;width:10px;height:7px;background:#ffffff"></div>
<div style="left:11px;top:515px;width:10px;height:9px;background:#f1f2f4"></div>
<div style="left:11px;top:524px;width:10px;height:1px;background:#d5d5d5"></div>
<div style="left:23px;top:524px;width:843px;height:1px;background:#c8c8c8"></div>
<span class="t" style="right:811px;top:510px;font-size:12px;letter-spacing:0px;color:#000;text-align:right;transform:scaleX(0.880);transform-origin:100% 0">2</span>
<span class="t" style="left:59.5px;top:510px;font-size:12px;letter-spacing:0px;color:#000;transform:scaleX(0.880);transform-origin:0 0;">4545</span>
<span class="t" style="left:142.6px;top:510px;font-size:12px;letter-spacing:0px;color:#000;transform:scaleX(0.880);transform-origin:0 0;">Alfacomp Composite</span>
<span class="t" style="left:399.5px;top:510px;font-size:12px;letter-spacing:0px;color:#000;transform:scaleX(0.880);transform-origin:0 0;">1 Packung</span>
<span class="t" style="right:155px;top:510px;font-size:12px;letter-spacing:0px;color:#a8a8a8;text-align:right;transform:scaleX(0.880);transform-origin:100% 0">3</span>
<svg style="left:716px;top:513px" width="9" height="9" viewBox="0 0 9 9"><rect x="0.5" y="0.5" width="8" height="8" fill="#f4f4f4" stroke="#8e8f8f"/><path d="M2 4.5 H7 M4.5 2 V7" stroke="#23468c" stroke-width="1.2"/></svg>
<span class="t" style="left:762.3px;top:510px;font-size:12px;letter-spacing:0px;color:#000;transform:scaleX(0.880);transform-origin:0 0;">16.10.2015</span>
<span class="t" style="left:821.7px;top:510px;font-size:12px;letter-spacing:0px;color:#000;transform:scaleX(0.880);transform-origin:0 0;">Meier</span>
<div style="left:11px;top:525px;width:10px;height:7px;background:#ffffff"></div>
<div style="left:11px;top:532px;width:10px;height:9px;background:#f1f2f4"></div>
<div style="left:11px;top:541px;width:10px;height:1px;background:#d5d5d5"></div>
<div style="left:23px;top:541px;width:843px;height:1px;background:#c8c8c8"></div>
<span class="t" style="right:811px;top:527px;font-size:12px;letter-spacing:0px;color:#000;text-align:right;transform:scaleX(0.880);transform-origin:100% 0">2</span>
<span class="t" style="left:59.5px;top:527px;font-size:12px;letter-spacing:0px;color:#000;transform:scaleX(0.880);transform-origin:0 0;">4545</span>
<span class="t" style="left:142.6px;top:527px;font-size:12px;letter-spacing:0px;color:#000;transform:scaleX(0.880);transform-origin:0 0;">Alfacomp Composite</span>
<span class="t" style="left:399.5px;top:527px;font-size:12px;letter-spacing:0px;color:#000;transform:scaleX(0.880);transform-origin:0 0;">1 Packung</span>
<span class="t" style="right:155px;top:527px;font-size:12px;letter-spacing:0px;color:#a8a8a8;text-align:right;transform:scaleX(0.880);transform-origin:100% 0">1</span>
<svg style="left:716px;top:530px" width="9" height="9" viewBox="0 0 9 9"><rect x="0.5" y="0.5" width="8" height="8" fill="#f4f4f4" stroke="#8e8f8f"/><path d="M2 4.5 H7 M4.5 2 V7" stroke="#23468c" stroke-width="1.2"/></svg>
<span class="t" style="left:762.3px;top:527px;font-size:12px;letter-spacing:0px;color:#000;transform:scaleX(0.880);transform-origin:0 0;">20.05.2016</span>
<span class="t" style="left:821.7px;top:527px;font-size:12px;letter-spacing:0px;color:#000;transform:scaleX(0.880);transform-origin:0 0;">Meier</span>
<div style="left:11px;top:542px;width:10px;height:7px;background:#ffffff"></div>
<div style="left:11px;top:549px;width:10px;height:9px;background:#f1f2f4"></div>
<div style="left:11px;top:558px;width:10px;height:1px;background:#d5d5d5"></div>
<div style="left:23px;top:558px;width:843px;height:1px;background:#c8c8c8"></div>
<span class="t" style="right:811px;top:544px;font-size:12px;letter-spacing:0px;color:#000;text-align:right;transform:scaleX(0.880);transform-origin:100% 0">3</span>
<span class="t" style="left:59.5px;top:544px;font-size:12px;letter-spacing:0px;color:#000;transform:scaleX(0.880);transform-origin:0 0;">9160612</span>
<span class="t" style="left:142.6px;top:544px;font-size:12px;letter-spacing:0px;color:#000;transform:scaleX(0.880);transform-origin:0 0;">Alkomed Tupfer</span>
<span class="t" style="left:399.5px;top:544px;font-size:12px;letter-spacing:0px;color:#000;transform:scaleX(0.880);transform-origin:0 0;">1 Karton</span>
<span class="t" style="right:155px;top:544px;font-size:12px;letter-spacing:0px;color:#000;text-align:right;transform:scaleX(0.880);transform-origin:100% 0">0</span>
<svg style="left:716px;top:547px" width="9" height="9" viewBox="0 0 9 9"><rect x="0.5" y="0.5" width="8" height="8" fill="#f4f4f4" stroke="#8e8f8f"/><path d="M2 4.5 H7 M4.5 2 V7" stroke="#23468c" stroke-width="1.2"/></svg>
<span class="t" style="left:762.3px;top:544px;font-size:12px;letter-spacing:0px;color:#000;transform:scaleX(0.880);transform-origin:0 0;">16.10.2015</span>
<span class="t" style="left:821.7px;top:544px;font-size:12px;letter-spacing:0px;color:#000;transform:scaleX(0.880);transform-origin:0 0;">Meier</span>
<div style="left:11px;top:559px;width:10px;height:7px;background:#ffffff"></div>
<div style="left:11px;top:566px;width:10px;height:9px;background:#f1f2f4"></div>
<div style="left:11px;top:575px;width:10px;height:1px;background:#d5d5d5"></div>
<div style="left:23px;top:575px;width:843px;height:1px;background:#c8c8c8"></div>
<span class="t" style="right:811px;top:561px;font-size:12px;letter-spacing:0px;color:#000;text-align:right;transform:scaleX(0.880);transform-origin:100% 0">43</span>
<span class="t" style="left:59.5px;top:561px;font-size:12px;letter-spacing:0px;color:#000;transform:scaleX(0.880);transform-origin:0 0;">02282</span>
<span class="t" style="left:142.6px;top:561px;font-size:12px;letter-spacing:0px;color:#000;transform:scaleX(0.880);transform-origin:0 0;">Traypurol</span>
<span class="t" style="right:155px;top:561px;font-size:12px;letter-spacing:0px;color:#000;text-align:right;transform:scaleX(0.880);transform-origin:100% 0">0</span>
<svg style="left:716px;top:564px" width="9" height="9" viewBox="0 0 9 9"><rect x="0.5" y="0.5" width="8" height="8" fill="#f4f4f4" stroke="#8e8f8f"/><path d="M2 4.5 H7 M4.5 2 V7" stroke="#23468c" stroke-width="1.2"/></svg>
<span class="t" style="left:762.3px;top:561px;font-size:12px;letter-spacing:0px;color:#000;transform:scaleX(0.880);transform-origin:0 0;">16.10.2015</span>
<span class="t" style="left:821.7px;top:561px;font-size:12px;letter-spacing:0px;color:#000;transform:scaleX(0.880);transform-origin:0 0;">Meier</span>
<div style="left:56px;top:490px;width:1px;height:86px;background:#c8c8c8"></div>
<div style="left:139px;top:490px;width:1px;height:86px;background:#c8c8c8"></div>
<div style="left:396px;top:490px;width:1px;height:86px;background:#c8c8c8"></div>
<div style="left:671px;top:490px;width:1px;height:86px;background:#c8c8c8"></div>
<div style="left:712px;top:490px;width:1px;height:86px;background:#c8c8c8"></div>
<div style="left:759px;top:490px;width:1px;height:86px;background:#c8c8c8"></div>
<div style="left:818px;top:490px;width:1px;height:86px;background:#c8c8c8"></div>
<div style="left:21px;top:490px;width:1px;height:86px;background:#000"></div>
<svg style="left:13px;top:493px" width="7" height="11" viewBox="0 0 7 11"><path d="M0 0 L6 5.5 L0 11Z" fill="#000"/></svg>
<svg style="left:0;top:0" width="866" height="652" viewBox="0 0 866 652">
<defs><filter id="sh" x="-20%" y="-50%" width="140%" height="200%"><feGaussianBlur stdDeviation="2.2"/></filter></defs>
<ellipse cx="108.5" cy="394" rx="102" ry="30" transform="rotate(0.4 108.5 394)" fill="none" stroke="#000" stroke-opacity="0.4" stroke-width="6" filter="url(#sh)"/>
<ellipse cx="105.6" cy="390.3" rx="102.2" ry="30.2" transform="rotate(0.4 105.6 390.3)" fill="none" stroke="#c24a30" stroke-width="4.5"/>
<line x1="150.5" y1="72.7" x2="112.6" y2="344" stroke="#c24a30" stroke-width="6.5"/>
<polyline points="103.4,313.6 111.7,344 130.2,318.2" fill="none" stroke="#c24a30" stroke-width="6.5" stroke-linejoin="miter" stroke-miterlimit="10"/>
</svg></body></html>
